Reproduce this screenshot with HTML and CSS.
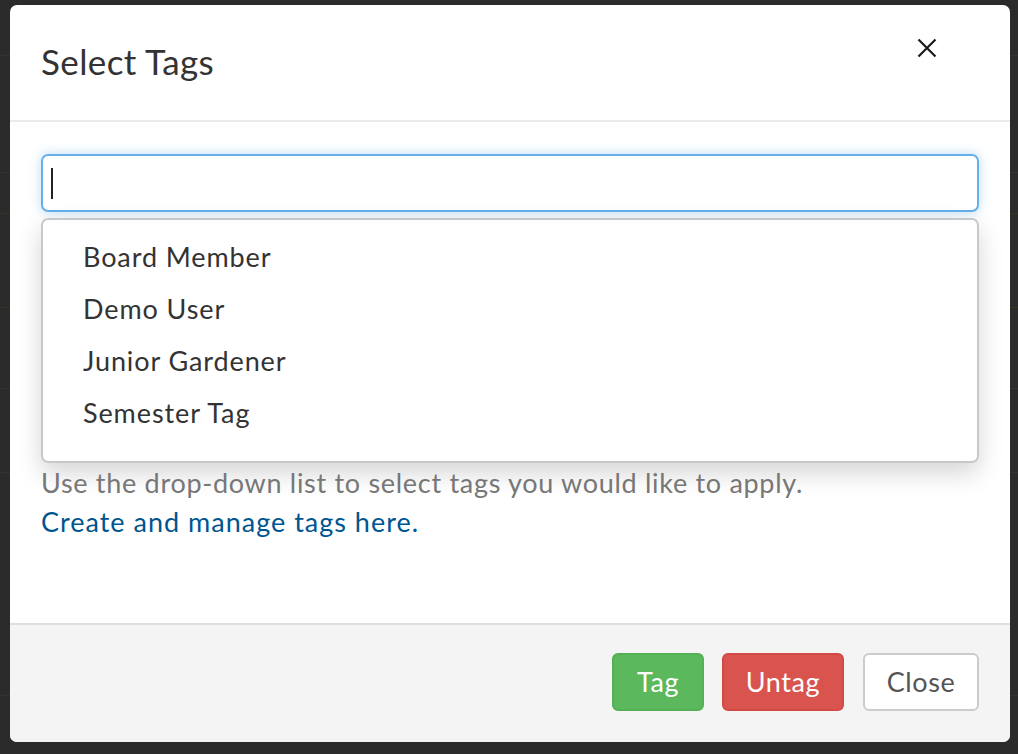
FILE: index.html
```html
<!DOCTYPE html>
<html>
<head>
<meta charset="utf-8">
<link rel="stylesheet" href="styles.css">
</head>
<body>
<div class="modal">
  <div class="modal-header">
    <h4 class="modal-title">Select Tags</h4>
    <button class="close-x" aria-label="Close">
      <svg width="20" height="20" viewBox="0 0 20 20"><path d="M1.5 1.5 L18.5 18.5 M18.5 1.5 L1.5 18.5" stroke="#1a1a1a" stroke-width="2.2" fill="none"/></svg>
    </button>
  </div>
  <div class="modal-body">
    <div class="search"><span class="caret"></span></div>
    <ul class="results">
      <li>Board Member</li>
      <li>Demo User</li>
      <li>Junior Gardener</li>
      <li>Semester Tag</li>
    </ul>
    <p class="help">Use the drop-down list to select tags you would like to apply.<br><a href="#">Create and manage tags here.</a></p>
  </div>
  <div class="modal-footer">
    <button class="btn btn-success">Tag</button>
    <button class="btn btn-danger">Untag</button>
    <button class="btn btn-default">Close</button>
  </div>
</div>
</body>
</html>
```
FILE: styles.css
```css
html, body {
  margin: 0;
  padding: 0;
}
body {
  width: 1018px;
  height: 754px;
  overflow: hidden;
  background-color: #2b2b2b;
  background-image:
    linear-gradient(to bottom, transparent 55px, #333 55px, #333 56px, transparent 56px),
    linear-gradient(to bottom, transparent 172px, #333 172px, #333 173px, transparent 173px),
    linear-gradient(to bottom, transparent 213px, #3a3325 213px, #3a3325 214px, transparent 214px),
    linear-gradient(to bottom, transparent 307px, #3a3325 307px, #3a3325 308px, transparent 308px),
    linear-gradient(to bottom, transparent 388px, #333 388px, #333 389px, transparent 389px),
    linear-gradient(to bottom, transparent 472px, #333 472px, #333 473px, transparent 473px),
    linear-gradient(to bottom, transparent 695px, #333 695px, #333 696px, transparent 696px);
  font-family: "Lato", "Liberation Sans", sans-serif;
  color: #333;
}
.modal {
  margin: 5px 0 0 10px;
  width: 1000px;
  height: 737px;
  background: #fff;
  border-radius: 7px;
  display: flex;
  flex-direction: column;
  overflow: hidden;
}
.modal-header {
  height: 115px;
  border-bottom: 2px solid #ebebeb;
  display: flex;
  align-items: flex-start;
  justify-content: space-between;
  padding: 0 31px;
  box-sizing: content-box;
  flex: none;
}
.modal-title {
  margin: 34px 0 0 0;
  font-size: 35px;
  font-weight: 400;
  line-height: 44px;
  letter-spacing: 0.4px;
  color: #333;
}
.close-x {
  margin: 33px 42px 0 0;
  padding: 0;
  border: 0;
  background: transparent;
  width: 20px;
  height: 20px;
  display: flex;
}
.modal-body {
  flex: 1;
  padding: 32px 31px 0 31px;
}
.search {
  height: 54px;
  border: 2px solid #66afe9;
  border-radius: 7px;
  box-shadow: 0 0 12px rgba(102, 175, 233, 0.45);
  display: flex;
  align-items: center;
  padding-left: 8px;
}
.caret {
  width: 2px;
  height: 31px;
  background: #222;
}
.results {
  list-style: none;
  margin: 6px 0 0 0;
  padding: 11px 0 22px 0;
  border: 2px solid #c8c8c8;
  border-radius: 7px;
  box-shadow: 0 10px 24px rgba(0, 0, 0, 0.17);
}
.results li {
  height: 52px;
  line-height: 52px;
  padding-left: 40px;
  font-size: 27px;
  letter-spacing: 0.9px;
  color: #333;
}
.help {
  margin: 0;
  font-size: 27px;
  line-height: 39px;
  letter-spacing: 0.7px;
  color: #777;
}
.help a {
  color: #00558f;
  text-decoration: none;
  letter-spacing: 1px;
}
.modal-footer {
  height: 119px;
  border-top: 2px solid #dedede;
  background: #f4f4f4;
  display: flex;
  justify-content: flex-end;
  align-items: flex-start;
  padding: 28px 31px 0 0;
  box-sizing: border-box;
  gap: 18px;
  flex: none;
}
.btn {
  height: 58px;
  border-radius: 6px;
  font-family: "Lato", "Liberation Sans", sans-serif;
  font-size: 27px;
  letter-spacing: 0.6px;
  padding: 0 0 2px 0;
  border: 2px solid transparent;
  box-sizing: border-box;
}
.btn-success {
  width: 92px;
  background: #5cb85c;
  border-color: #55b055;
  color: #fff;
}
.btn-danger {
  width: 122px;
  background: #d9534f;
  border-color: #d24a46;
  color: #fff;
}
.btn-default {
  width: 116px;
  margin-left: 1px;
  background: #fff;
  border-color: #cccccc;
  color: #555;
}
```
